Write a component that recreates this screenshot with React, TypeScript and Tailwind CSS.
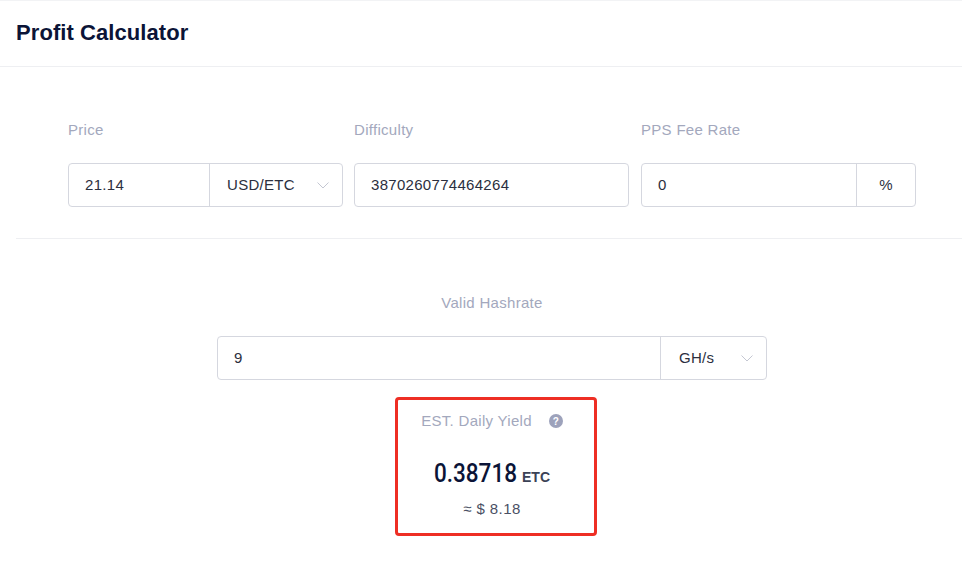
import React from "react";

const Chevron = () => (
  <svg width="12" height="7" viewBox="0 0 12 7" fill="none" className="shrink-0">
    <path d="M0.5 0.5l5.5 5.5 5.5-5.5" stroke="#c4c7d2" strokeWidth="1" />
  </svg>
);

function Field({ label, children }: { label: string; children: React.ReactNode }) {
  return (
    <div className="w-[275px] shrink-0">
      <div className="h-[20px] text-[15px] leading-[20px] text-[#a3a8bd] tracking-[0.3px]">{label}</div>
      <div className="mt-[23px]">{children}</div>
    </div>
  );
}

function Group({ value, unit, unitW, chevron, unitPad }: { value: string; unit: string; unitW: string; chevron?: boolean; unitPad?: string }) {
  return (
    <div className="flex h-[44px] w-full rounded-[4px] border border-[#d5d7df] bg-white text-[15px] tracking-[0.3px] text-[#2b2f3e]">
      <div className="flex min-w-0 flex-1 items-center pl-[16px]">{value}</div>
      <div className={`flex shrink-0 items-center border-l border-[#d5d7df] ${unitW} ${chevron ? `justify-between ${unitPad ?? "pl-[17px]"} pr-[13px]` : "justify-center"}`}>
        <span>{unit}</span>
        {chevron && <Chevron />}
      </div>
    </div>
  );
}

export default function App() {
  return (
    <div className="h-[568px] w-[962px] overflow-hidden bg-white font-['Liberation_Sans',Arial,sans-serif]">
      <div className="flex h-[67px] items-center border-y border-t-[#f2f3f5] border-b-[#eeeff2] pb-[2px] pl-[16px]">
        <h1 className="text-[22px] font-bold leading-none tracking-[0.07px] text-[#0b1437]">Profit Calculator</h1>
      </div>
      <div className="ml-[16px] h-[172px] border-b border-[#eeeff2] pt-[53px]">
        <div className="ml-[52px] flex gap-[11px]">
          <Field label="Price">
            <Group value="21.14" unit="USD/ETC" unitW="w-[133px]" chevron />
          </Field>
          <Field label="Difficulty">
            <Group value="3870260774464264" unit="" unitW="hidden" />
          </Field>
          <div className="ml-[1px]">
            <Field label="PPS Fee Rate">
              <Group value="0" unit="%" unitW="w-[59px]" />
            </Field>
          </div>
        </div>
      </div>
      <div className="flex flex-col items-center pl-[22px] pt-[54px]">
        <div className="h-[20px] text-[15px] leading-[20px] text-[#a3a8bd] tracking-[0.3px]">Valid Hashrate</div>
        <div className="mt-[23px] w-[550px]">
          <Group value="9" unit="GH/s" unitW="w-[106px]" chevron unitPad="pl-[18px]" />
        </div>
        <div className="ml-[8px] mt-[17px] flex h-[139px] w-[202px] flex-col items-center rounded-[4px] border-[3px] border-[#ee2e24] pr-[8px]">
          <div className="mt-[11px] flex h-[20px] items-center text-[15px] text-[#a3a8bd] tracking-[0.3px]">
            <span>EST. Daily Yield</span>
            <span className="ml-[17px] flex h-[14px] w-[14px] items-center justify-center rounded-full bg-[#9da2bb] text-[10px] font-bold text-white">?</span>
          </div>
          <div className="mt-[29px] flex h-[28px] items-baseline">
            <span className="inline-block w-[83px] origin-left scale-x-[0.9] font-['Roboto',sans-serif] text-[25px] font-medium leading-[28px] text-[#0b1437]">0.38718</span>
            <span className="ml-[5px] text-[14px] font-bold text-[#3b4256]">ETC</span>
          </div>
          <div className="mt-[12px] h-[18px] text-[15px] leading-[18px] text-[#4a5064] tracking-[0.4px]">≈ $ 8.18</div>
        </div>
      </div>
    </div>
  );
}
